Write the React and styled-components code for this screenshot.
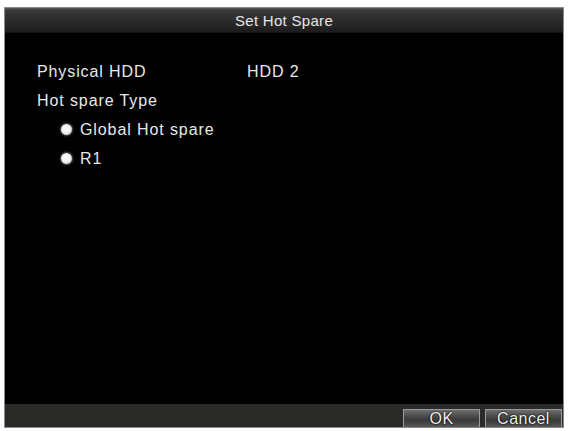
import React from "react";
import styled, { createGlobalStyle } from "styled-components";

const GlobalStyle = createGlobalStyle`
  html, body {
    margin: 0;
    padding: 0;
    background: #ffffff;
  }
  body {
    font-family: "Liberation Sans", Arial, sans-serif;
  }
`;

const Page = styled.div`
  width: 568px;
  height: 431px;
  padding: 7px 4px 3px 4px;
  box-sizing: border-box;
  background: #fff;
`;

const Dialog = styled.div`
  height: 100%;
  display: flex;
  flex-direction: column;
  background: #000;
  border: 1px solid #8a8a8a;
  box-sizing: border-box;
`;

const TitleBar = styled.div`
  height: 24px;
  display: flex;
  align-items: center;
  justify-content: center;
  background: linear-gradient(#5a5a5a 0px, #3c3c3c 2px, #333 6px, #262626 18px, #1c1c1c 24px);
  border-bottom: 1px solid #111;
  color: #e6e6e6;
  font-size: 15px;
  letter-spacing: 0.3px;
`;

const Body = styled.div`
  flex: 1;
  padding: 24px 0 0 32px;
  color: #e8e8e8;
  font-size: 16px;
  letter-spacing: 0.9px;
`;

const Row = styled.div`
  height: 29px;
  display: flex;
  align-items: center;
  padding-left: ${(p) => p.$indent || 0}px;
`;

const Label = styled.span`
  width: 210px;
`;

const Radio = styled.span`
  width: 11px;
  height: 11px;
  border-radius: 50%;
  margin-right: 8px;
  background: radial-gradient(circle at 45% 40%, #ffffff 0%, #f4f4f4 45%, #b8b8b8 100%);
  box-shadow: 0 0 2px 1px rgba(255, 255, 255, 0.35);
`;

const Footer = styled.div`
  height: 23px;
  display: flex;
  align-items: flex-end;
  justify-content: flex-end;
  gap: 5px;
  padding-right: 1px;
  background: #2a2a28;
`;

const Button = styled.div`
  width: 77px;
  height: 18px;
  box-sizing: border-box;
  display: flex;
  align-items: center;
  justify-content: center;
  border: 1px solid #9a9a9a;
  border-bottom: none;
  background: linear-gradient(#6e6e6e, #444 45%, #3a3a3a 60%, #565656);
  color: #f0f0f0;
  font-size: 16px;
  letter-spacing: 0.5px;
  text-shadow: 0 0 1px #000, 0 0 2px #000;
`;

export default function App() {
  return (
    <>
      <GlobalStyle />
      <Page>
        <Dialog>
          <TitleBar>Set Hot Spare</TitleBar>
          <Body>
            <Row>
              <Label>Physical HDD</Label>
              <span>HDD 2</span>
            </Row>
            <Row>
              <Label>Hot spare Type</Label>
            </Row>
            <Row $indent={24}>
              <Radio />
              <span>Global Hot spare</span>
            </Row>
            <Row $indent={24}>
              <Radio />
              <span>R1</span>
            </Row>
          </Body>
          <Footer>
            <Button>OK</Button>
            <Button>Cancel</Button>
          </Footer>
        </Dialog>
      </Page>
    </>
  );
}
